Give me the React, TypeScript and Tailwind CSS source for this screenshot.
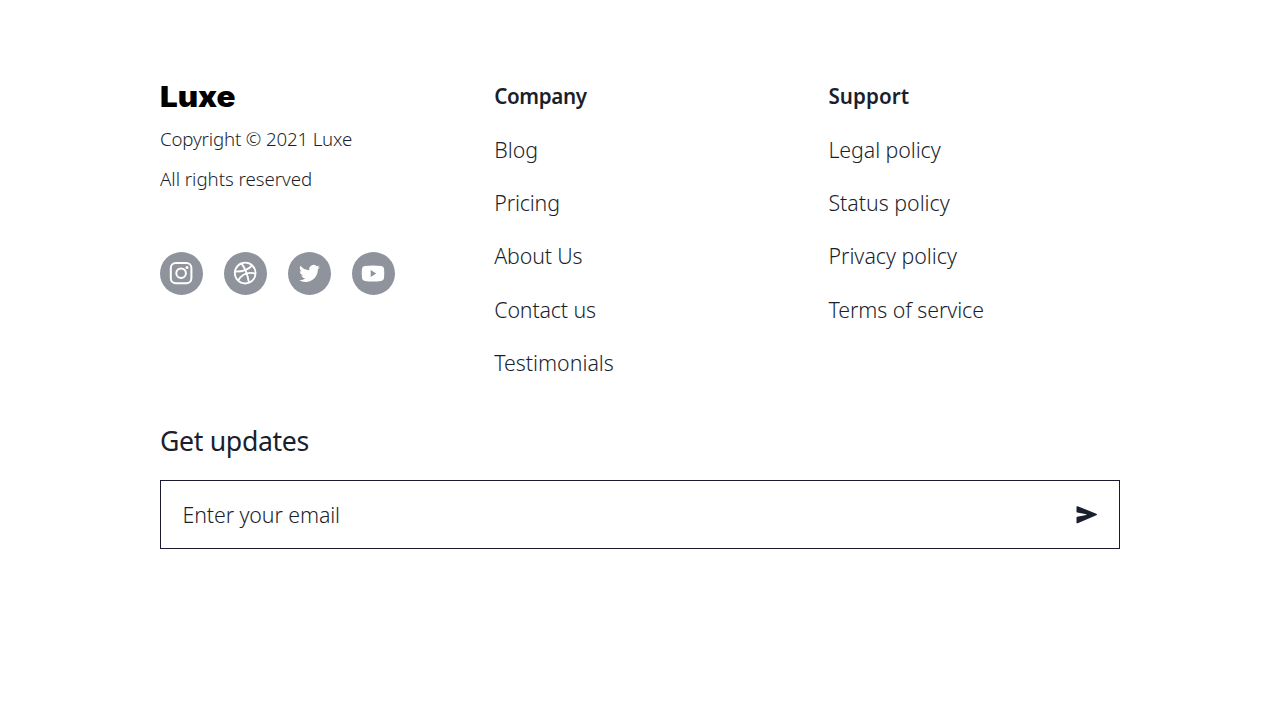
import React from 'react';

interface LinkItem {
  label: string;
  className: string;
}

interface LinkColumnProps {
  title: LinkItem;
  links: LinkItem[];
}

const companyLinks: LinkItem[] = [
  { label: 'Blog', className: 'tracking-normal' },
  { label: 'Pricing', className: 'tracking-[-0.14px]' },
  { label: 'About Us', className: 'tracking-[-0.12px]' },
  { label: 'Contact us', className: 'tracking-[-0.13px]' },
  { label: 'Testimonials', className: 'tracking-normal' },
];

const supportLinks: LinkItem[] = [
  { label: 'Legal policy', className: 'tracking-[-0.06px]' },
  { label: 'Status policy', className: 'tracking-normal' },
  { label: 'Privacy policy', className: 'tracking-normal' },
  { label: 'Terms of service', className: 'tracking-[-0.06px]' },
];

const LinkColumn: React.FC<LinkColumnProps> = ({ title, links }) => (
  <div className="flex flex-col gap-[21.33px] text-[21.33px] leading-[32px]">
    <h3 className="text-[20.6px] font-semibold">
      <span className={title.className}>{title.label}</span>
    </h3>
    {links.map((link) => (
      <a key={link.label} href="#" className="font-[350]">
        <span className={link.className}>{link.label}</span>
      </a>
    ))}
  </div>
);

const InstagramIcon = () => (
  <svg viewBox="0 0 24 24" className="h-6 w-6" fill="none" stroke="currentColor" strokeWidth="2">
    <rect x="1.8" y="2" width="20.6" height="20.2" rx="5" />
    <circle cx="12.1" cy="12.2" r="4.8" />
    <circle cx="18" cy="6.4" r="1.5" fill="currentColor" stroke="none" />
  </svg>
);

const DribbbleIcon = () => (
  <svg viewBox="0 0 24 24" className="h-6 w-6" fill="none" stroke="currentColor" strokeWidth="1.8">
    <circle cx="12.2" cy="12.1" r="10.4" />
    <path d="M8.4 2.4c3.3 4.3 5.9 9.3 7.5 19.2M1.8 10.5c7.7.2 13.2-1.3 17.3-6.2M5.1 19.6c4-6.8 9.8-8.9 17.5-7" />
  </svg>
);

const TwitterIcon = () => (
  <svg viewBox="0 0 24 24" className="mt-px h-[21px] w-[21px]" fill="currentColor">
    <path d="M23.953 4.57a10 10 0 01-2.825.775 4.958 4.958 0 002.163-2.723c-.951.555-2.005.959-3.127 1.184a4.92 4.92 0 00-8.384 4.482C7.69 8.095 4.067 6.13 1.64 3.162a4.822 4.822 0 00-.666 2.475c0 1.71.87 3.213 2.188 4.096a4.904 4.904 0 01-2.228-.616v.06a4.923 4.923 0 003.946 4.827 4.996 4.996 0 01-2.212.085 4.936 4.936 0 004.604 3.417 9.867 9.867 0 01-6.102 2.105c-.39 0-.779-.023-1.17-.067a13.995 13.995 0 007.557 2.209c9.053 0 13.998-7.496 13.998-13.985 0-.21 0-.42-.015-.63A9.935 9.935 0 0024 4.59z" />
  </svg>
);

const YoutubeIcon = () => (
  <svg viewBox="0 0 24 24" className="h-6 w-6" fill="currentColor">
    <path
      fillRule="evenodd"
      d="M3.8 4.9Q12 3.9 20.2 4.9Q22.7 5.1 23 7.5Q23.6 12.4 23 17.3Q22.7 19.7 20.2 19.9Q12 20.9 3.8 19.9Q1.3 19.7 1 17.3Q.4 12.4 1 7.5Q1.3 5.1 3.8 4.9ZM9.7 9v7l5.5-3.5z"
    />
  </svg>
);

const SendIcon = () => (
  <svg viewBox="0 0 22 20" className="mt-px h-5 w-[22px]" fill="currentColor">
    <path d="M.5 2.1Q.5 .9 1.7 1.2L20.3 8.7Q21.7 9.5 20.3 10.3L1.7 18.3Q.5 18.6.5 17.5V12.7Q.5 12 1.3 11.8L10.2 10.1Q10.8 9.7 10.2 9.3L1.3 7.6Q.5 7.4.5 6.7Z" />
  </svg>
);

const socials = [
  { name: 'Instagram', icon: <InstagramIcon /> },
  { name: 'Dribbble', icon: <DribbbleIcon /> },
  { name: 'Twitter', icon: <TwitterIcon /> },
  { name: 'Youtube', icon: <YoutubeIcon /> },
];

const App: React.FC = () => {
  return (
    <footer className="min-h-screen bg-white px-40 pt-[80.3px] font-['Noto_Sans','Open_Sans',sans-serif] text-[#1a1f2e]">
      <div className="grid grid-cols-3 gap-x-[42.67px]">
        <div>
          <div className="h-8 origin-left scale-x-110 pt-px font-['Inter',sans-serif] text-[28.5px] font-black leading-[32px] text-black">
            Luxe
          </div>
          <p className="mt-[12.7px] text-[18.67px] font-[350] leading-[28px]">
            <span className="tracking-[-0.15px]">Copyright © 2021 Luxe</span>
          </p>
          <p className="mt-3 text-[18.67px] font-[350] leading-[28px]">
            <span className="tracking-[-0.03px]">All rights reserved</span>
          </p>
          <div className="mt-[59px] flex gap-[21.33px]">
            {socials.map((social) => (
              <a
                key={social.name}
                href="#"
                className="flex h-[42.67px] w-[42.67px] items-center justify-center rounded-full bg-[#8f939c] text-white"
              >
                {social.icon}
              </a>
            ))}
          </div>
        </div>
        <LinkColumn title={{ label: 'Company', className: 'tracking-[-0.35px]' }} links={companyLinks} />
        <LinkColumn title={{ label: 'Support', className: 'tracking-[0.05px]' }} links={supportLinks} />
      </div>

      <h2 className="mt-[42.7px] text-[26.67px] leading-[37px]">
        <span className="tracking-[-0.33px]">Get updates</span>
      </h2>
      <div className="mt-[21px] flex h-[69px] items-center justify-between border-[1.4px] border-[#1a1a2e] pl-[21.5px] pr-[21px] text-[21.33px] font-[350]">
        <span className="pt-px tracking-[-0.09px]">Enter your email</span>
        <SendIcon />
      </div>
    </footer>
  );
};

export default App;
